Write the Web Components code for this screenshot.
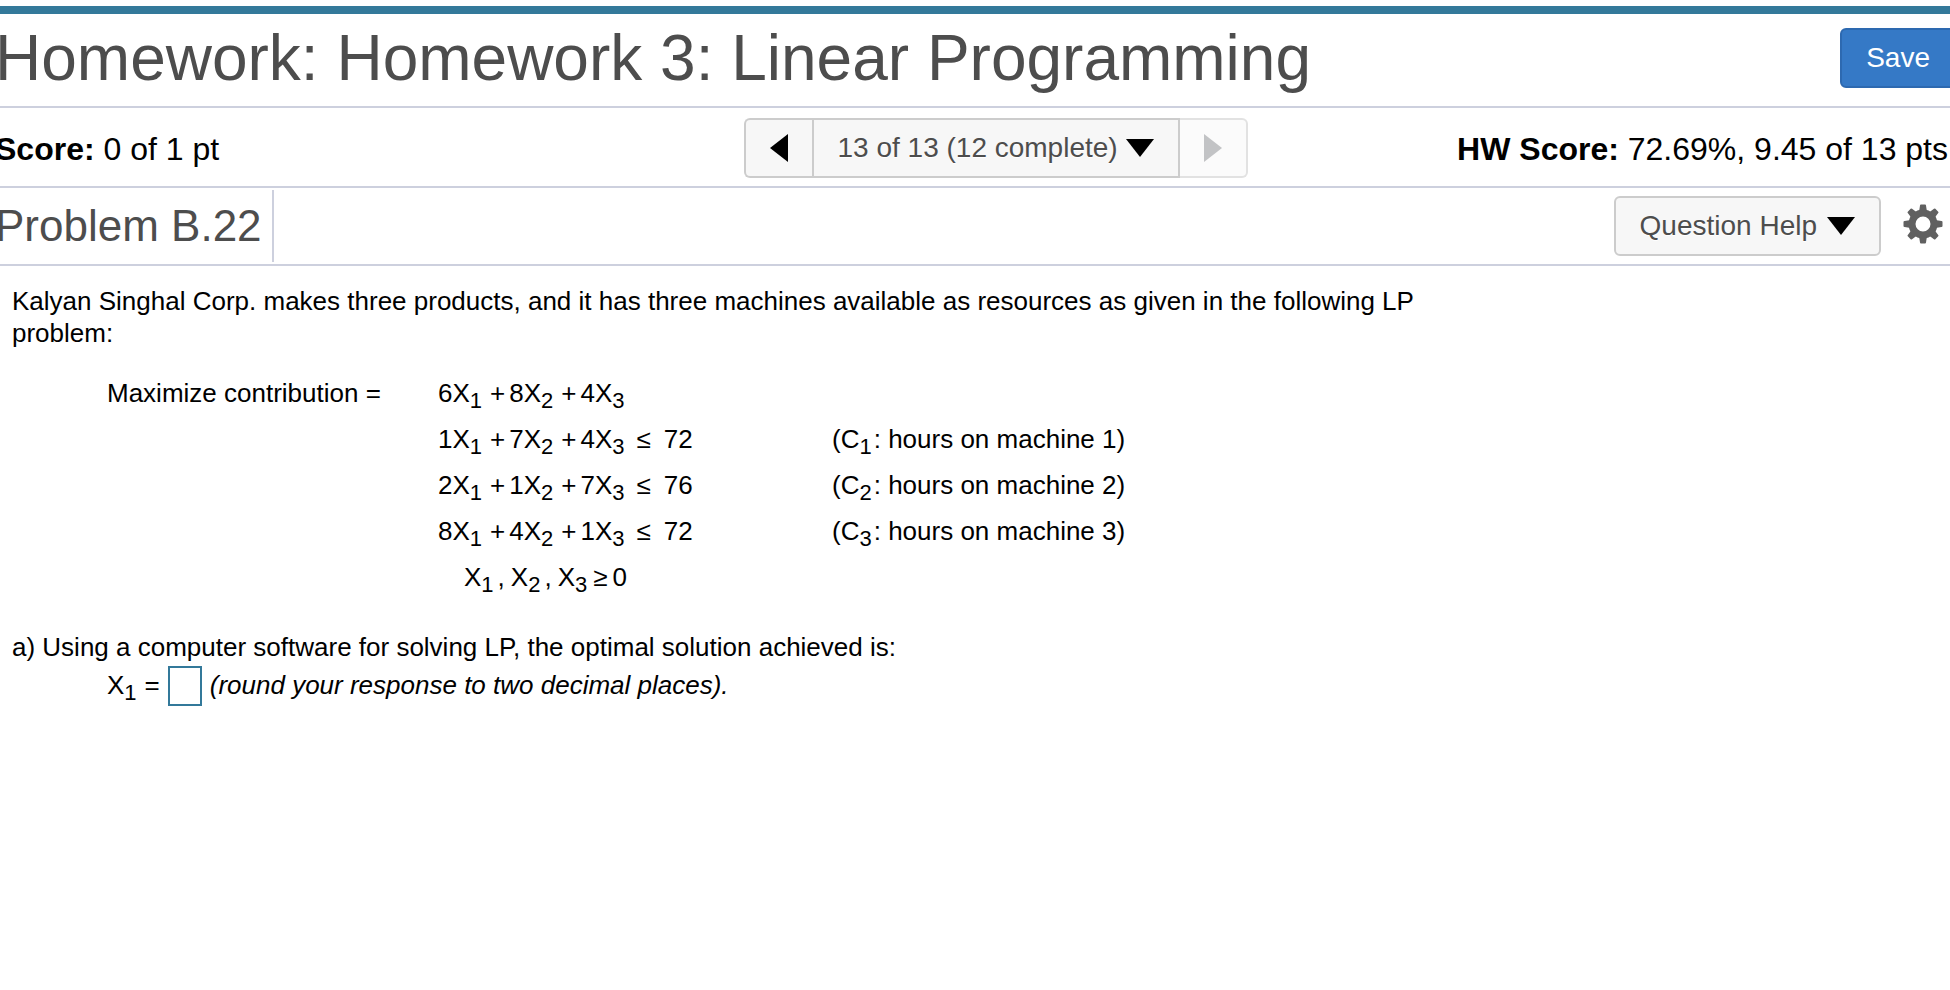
<!DOCTYPE html>
<html lang="en">
<head>
<meta charset="utf-8">
<meta name="viewport" content="width=device-width, initial-scale=1">
<title>Homework 3: Linear Programming</title>
<style>
  html { background: #fff; }
  body { margin: 0; overflow-x: hidden; font-family: "Liberation Sans", Arial, Helvetica, sans-serif; color: #000; }
</style>
</head>
<body>
<homework-page></homework-page>

<template id="homework-page">
  <style>
    :host { display: block; padding-top: 6px; }
    header { margin: 0 -6px 0 -5px; border-top: 8px solid #33799a; }
  </style>
  <header>
    <title-bar>
      Homework: Homework 3: Linear Programming
      <tool-button slot="action" kind="primary">Save</tool-button>
    </title-bar>
    <score-bar>
      <score-text slot="start" label="Score:">0 of 1 pt</score-text>
      <question-pager></question-pager>
      <score-text slot="end" label="HW Score:">72.69%, 9.45 of 13 pts</score-text>
    </score-bar>
    <problem-bar>Problem B.22</problem-bar>
  </header>
  <problem-body></problem-body>
</template>

<template id="title-bar">
  <style>
    :host { display: flex; align-items: center; justify-content: space-between; box-sizing: border-box; min-height: 94px; padding-bottom: 4px; border-bottom: 2px solid #cdd0de; }
    h1 { margin: 0; font-size: 64px; line-height: 72px; font-weight: 400; color: #4d4d4d; }
  </style>
  <h1><slot></slot></h1>
  <slot name="action"></slot>
</template>

<template id="tool-button">
  <style>
    :host { display: block; flex: none; }
    button { display: flex; align-items: center; gap: 10px; box-sizing: border-box; height: 60px; margin: 0; padding: 0 24px; font: inherit; font-size: 28px; line-height: 32px; color: #4d4d4d; background: #f7f7f7; border: 2px solid #ccc; border-radius: 6px; text-shadow: 0 1px 0 #fff; cursor: pointer; }
    :host([kind="primary"]) button { color: #fff; background: #3579c6; border-color: #2d69b0; text-shadow: none; }
  </style>
  <button type="button"><slot></slot></button>
</template>

<template id="score-bar">
  <style>
    :host { display: grid; grid-template-columns: 17fr auto 16fr; align-items: center; box-sizing: border-box; min-height: 80px; padding: 2px 4px 0 0; border-bottom: 2px solid #cdd0de; }
    .end { justify-self: end; padding-right: 4px; }
  </style>
  <slot name="start"></slot>
  <slot></slot>
  <div class="end"><slot name="end"></slot></div>
</template>

<template id="score-text">
  <style>
    :host { display: block; padding-top: 2px; font-size: 32px; line-height: 36px; white-space: nowrap; }
  </style>
  <b></b> <slot></slot>
</template>

<template id="question-pager">
  <style>
    :host { display: flex; }
    button, .picker { box-sizing: border-box; height: 60px; margin: 0; background: #f7f7f7; border: 2px solid #ccc; }
    button { display: grid; place-items: center; width: 68px; padding: 0; cursor: pointer; }
    .prev { border-right: 0; border-radius: 6px 0 0 6px; }
    .next { border-left: 0; border-radius: 0 6px 6px 0; background: #fbfbfb; border-color: #e2e2e2; }
    button svg { display: block; width: 18px; height: 28px; fill: #000; }
    .next svg { fill: #c2c3c5; }
    .picker { display: grid; align-items: center; width: 368px; }
    select, .picker svg { grid-area: 1 / 1; }
    select { appearance: none; width: 100%; height: 56px; margin: 0; padding: 0 60px 0 24px; border: 0; background: transparent; font: inherit; font-size: 28px; line-height: 32px; color: #4d4d4d; text-shadow: 0 1px 0 #fff; }
    .picker svg { justify-self: end; width: 28px; height: 18px; margin-right: 24px; pointer-events: none; }
  </style>
  <button class="prev" type="button" aria-label="Previous question"><svg viewBox="0 0 18 28"><path d="M18 0v28L0 14z"/></svg></button>
  <div class="picker">
    <select aria-label="Question"><option>13 of 13 (12 complete)</option></select>
    <svg viewBox="0 0 28 18" aria-hidden="true"><path d="M0 0h28L14 18z"/></svg>
  </div>
  <button class="next" type="button" aria-label="Next question" disabled><svg viewBox="0 0 18 28"><path d="M0 0v28l18-14z"/></svg></button>
</template>

<template id="problem-bar">
  <style>
    :host { display: flex; align-items: center; box-sizing: border-box; min-height: 78px; padding-right: 13px; border-bottom: 2px solid #cdd0de; }
    h2 { margin: 0 auto 0 0; padding-right: 10px; border-right: 2px solid #cdd0de; font-size: 44px; line-height: 72px; font-weight: 400; color: #4d4d4d; }
    .arrow { display: block; width: 28px; height: 18px; }
    .gear { margin: 0 0 0 22px; padding: 0 0 4px; border: 0; background: none; cursor: pointer; }
    .gear svg { display: block; width: 40px; height: 40px; fill: #606060; }
  </style>
  <h2><slot></slot></h2>
  <tool-button>Question Help <svg class="arrow" viewBox="0 0 28 18" aria-hidden="true"><path d="M0 0h28L14 18z"/></svg></tool-button>
  <button class="gear" type="button" aria-label="Settings">
    <svg viewBox="-20 -20 40 40">
      <defs><path id="tooth" d="M-4-12L-3-18.500Q-3-19.500-2-19.500H2Q3-19.500 3-18.500L4-12z"/></defs>
      <path fill-rule="evenodd" d="M0-14.500a14.500 14.500 0 1 0 0 29a14.500 14.500 0 1 0 0-29zM0-7.500a7.500 7.500 0 1 1 0 15a7.500 7.500 0 1 1 0-15z"/>
      <use href="#tooth"/><use href="#tooth" transform="rotate(45)"/><use href="#tooth" transform="rotate(90)"/><use href="#tooth" transform="rotate(135)"/>
      <use href="#tooth" transform="rotate(180)"/><use href="#tooth" transform="rotate(225)"/><use href="#tooth" transform="rotate(270)"/><use href="#tooth" transform="rotate(315)"/>
    </svg>
  </button>
</template>

<template id="problem-body">
  <style>
    :host { display: block; padding: 19px 12px 0; font-size: 26px; line-height: 32px; }
    p { margin: 0; max-width: 1420px; }
    lp-model { margin: 21px 0 31px 95px; }
    answer-line { margin: 3px 0 0 95px; }
  </style>
  <p>Kalyan Singhal Corp. makes three products, and it has three machines available as resources as given in the following LP problem:</p>
  <lp-model></lp-model>
  <p>a) Using a computer software for solving LP, the optimal solution achieved is:</p>
  <answer-line></answer-line>
</template>

<template id="lp-model">
  <style>
    :host { display: block; }
    table { border-collapse: collapse; }
    th, td { box-sizing: border-box; height: 46px; padding: 0; font-weight: 400; text-align: left; white-space: nowrap; line-height: 32px; }
    th { min-width: 331px; }
    td:nth-child(2) { min-width: 394px; }
    sub { font-size: 22px; line-height: 0; vertical-align: -6px; }
    .op { margin: 0 4px 0 8px; }
    .rel { margin: 0 13px 0 12px; }
    .comma { margin: 0 6px 0 4px; }
    .colon { margin-left: 2px; }
    .signs { padding-left: 26px; }
    .ge { margin: 0 5px 0 6px; }
  </style>
  <table>
    <tbody>
      <tr><th scope="row">Maximize contribution =</th><td>6X<sub>1</sub><span class="op">+</span>8X<sub>2</sub><span class="op">+</span>4X<sub>3</sub></td><td></td></tr>
      <tr><th></th><td>1X<sub>1</sub><span class="op">+</span>7X<sub>2</sub><span class="op">+</span>4X<sub>3</sub><span class="rel">≤</span>72</td><td>(C<sub>1</sub><span class="colon">:</span> hours on machine 1)</td></tr>
      <tr><th></th><td>2X<sub>1</sub><span class="op">+</span>1X<sub>2</sub><span class="op">+</span>7X<sub>3</sub><span class="rel">≤</span>76</td><td>(C<sub>2</sub><span class="colon">:</span> hours on machine 2)</td></tr>
      <tr><th></th><td>8X<sub>1</sub><span class="op">+</span>4X<sub>2</sub><span class="op">+</span>1X<sub>3</sub><span class="rel">≤</span>72</td><td>(C<sub>3</sub><span class="colon">:</span> hours on machine 3)</td></tr>
      <tr><th></th><td class="signs">X<sub>1</sub><span class="comma">,</span>X<sub>2</sub><span class="comma">,</span>X<sub>3</sub><span class="ge">≥</span>0</td><td></td></tr>
    </tbody>
  </table>
</template>

<template id="answer-line">
  <style>
    :host { display: flex; align-items: flex-start; gap: 8px; line-height: 38px; }
    sub { font-size: 22px; line-height: 0; vertical-align: -6px; }
    .eq { margin-left: 8px; }
    input { box-sizing: border-box; width: 34px; height: 40px; margin: 0; padding: 0 2px; border: 2px solid #33799a; border-radius: 0; background: #fff; font: inherit; }
  </style>
  <label for="x1">X<sub>1</sub><span class="eq">=</span></label>
  <input id="x1" type="text" inputmode="decimal" aria-describedby="hint">
  <em id="hint">(round your response to two decimal places).</em>
</template>

<script>
  class TemplateElement extends HTMLElement {
    constructor() {
      super();
      this.attachShadow({ mode: "open" })
        .append(document.getElementById(this.localName).content.cloneNode(true));
    }
  }

  class ScoreText extends TemplateElement {
    connectedCallback() {
      this.shadowRoot.querySelector("b").textContent = this.getAttribute("label");
    }
  }

  customElements.define("tool-button", class extends TemplateElement {});
  customElements.define("score-text", ScoreText);
  customElements.define("question-pager", class extends TemplateElement {});
  customElements.define("title-bar", class extends TemplateElement {});
  customElements.define("score-bar", class extends TemplateElement {});
  customElements.define("problem-bar", class extends TemplateElement {});
  customElements.define("lp-model", class extends TemplateElement {});
  customElements.define("answer-line", class extends TemplateElement {});
  customElements.define("problem-body", class extends TemplateElement {});
  customElements.define("homework-page", class extends TemplateElement {});
</script>
</body>
</html>
